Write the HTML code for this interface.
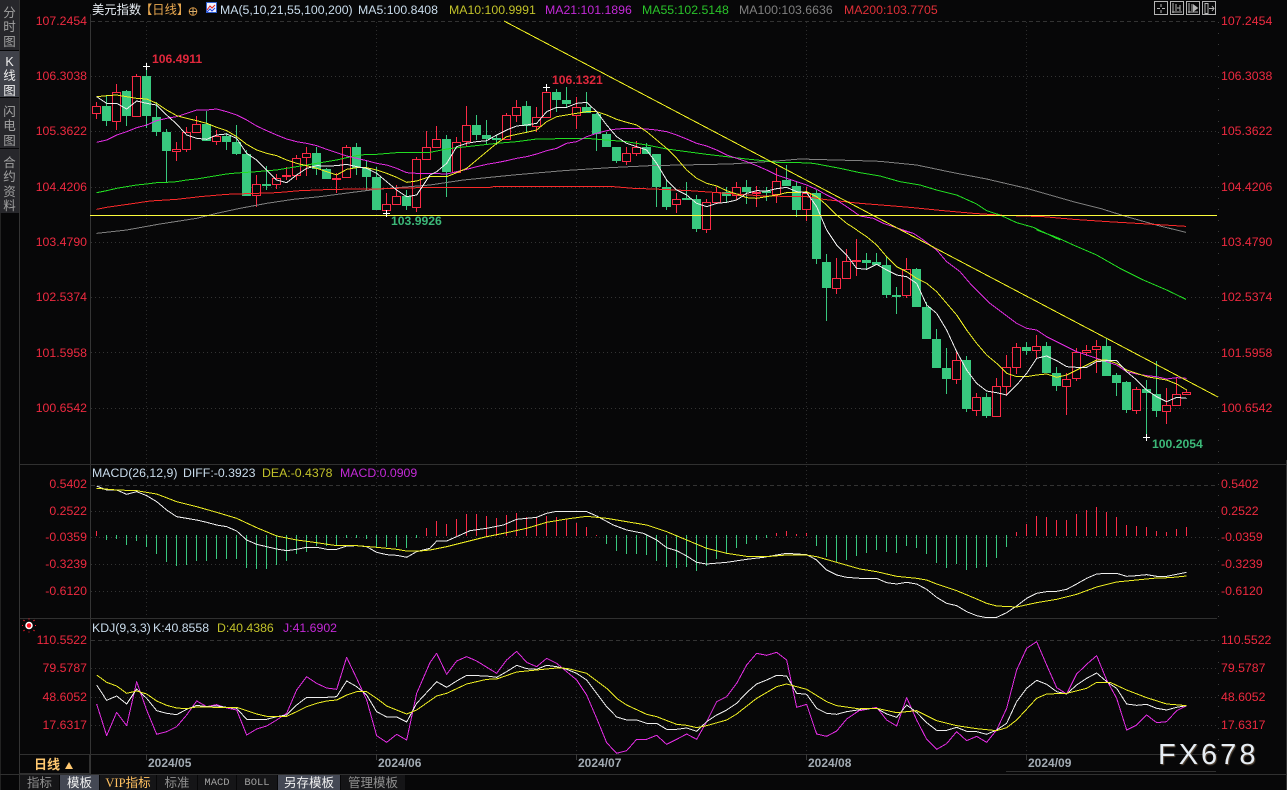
<!DOCTYPE html>
<html><head><meta charset="utf-8"><title>美元指数</title>
<style>
html,body{margin:0;padding:0;background:#070708}
#p{position:relative;width:1287px;height:790px;overflow:hidden;background:#070708;font-family:"Liberation Sans","Noto Sans CJK SC",sans-serif}
#p div{position:absolute;white-space:nowrap}
svg{position:absolute;left:0;top:0}
.t{font-size:12.3px;line-height:14px}
.l{left:20px;width:67px;text-align:right;font-size:12.3px;line-height:14px;color:#ee2a40}
.r{left:1221px;font-size:12.3px;line-height:14px;color:#ee2a40}
.d{top:756px;font-size:12px;line-height:14px;font-weight:bold;color:#a3abb3}
.a{font-size:12.2px;line-height:14px;font-weight:bold}
.s{left:0;width:19px;text-align:center;font-size:12.5px;line-height:14.3px;color:#a2a2a2;white-space:normal!important}
.b{top:775px;height:15px;line-height:16px;text-align:center;font-size:12.5px;color:#8f8f8f;background:#151517}
</style></head><body><div id="p">

<div style="left:0;top:0;width:19px;height:50px;background:#27272b"></div>
<div style="left:0;top:51px;width:19px;height:46px;background:#3f4149"></div>
<div style="left:0;top:98px;width:19px;height:50px;background:#27272b"></div>
<div style="left:0;top:149px;width:19px;height:64px;background:#27272b"></div>
<div style="left:0;top:213px;width:1px;height:577px;background:#222"></div>
<div class="s" style="top:6px">分<br>时<br>图</div>
<div class="s" style="top:55px;color:#f0f0f0">K<br>线<br>图</div>
<div class="s" style="top:105px">闪<br>电<br>图</div>
<div class="s" style="top:156px">合<br>约<br>资<br>料</div>

<svg width="1287" height="790" viewBox="0 0 1287 790" fill="none">
<g stroke="#2f2f2f">
<path d="M19.5 0V790M90.5 14V774M1286.5 460V790" stroke="#343434"/>
<path d="M20 464.5H1287M20 618.5H1217M20 754.5H1217M0 774.5H1287M1006 771.5H1216" stroke="#303030"/>
<path d="M20 773.5H90M89.5 755V774" stroke="#303030"/>
<path d="M91 21.5H1218M91 485.5H1218M91 640.5H1218" stroke-dasharray="4 3" stroke="#333"/>
<path d="M91 76.5H1218M91 131.5H1218M91 187.5H1218M91 242.5H1218M91 297.5H1218M91 352.5H1218M91 408.5H1218M91 511.5H1218M91 537.5H1218M91 564.5H1218M91 591.5H1218M91 668.5H1218M91 697.5H1218M91 725.5H1218" stroke-dasharray="1 3" stroke="#333"/>
<path d="M146.5 22V754M376.5 22V754M576.5 22V754M806.5 22V754M1026.5 22V754" stroke-dasharray="1 3" stroke="#2d2d2d"/>
<path d="M1218.5 22V618M1218.5 640V754" stroke-dasharray="1 10" stroke="#3a3a3a"/>
<path d="M146.5 754V760M376.5 754V760M576.5 754V760M806.5 754V760M1026.5 754V760" stroke="#3a3a3a"/>
</g>

<!-- green wicks -->
<path stroke="#38c87e" d="M106.5 96V126M126.5 90V126M146.5 66V128M156.5 102V136M166.5 129V182M206.5 111V141M226.5 133V150M236.5 125V155M246.5 150V196M266.5 166V190M316.5 147V175M326.5 168V179M356.5 143V175M366.5 160V191M376.5 167V210M406.5 190V210M446.5 135V197M476.5 115V140M486.5 120V145M496.5 135V145M526.5 101V132M556.5 89V112M566.5 87V108M586.5 92V113M596.5 113V151M606.5 132V147M616.5 147V163M646.5 143V154M656.5 154V207M666.5 180V210M686.5 182V200M696.5 195V232M726.5 187V202M746.5 180V204M766.5 187V201M786.5 165V186M796.5 182V217M816.5 190V264M826.5 254V321M866.5 253V270M876.5 253V265M886.5 256V298M896.5 287V314M916.5 268V307M926.5 302V339M936.5 329V368M946.5 348V394M966.5 356V412M986.5 393V418M1026.5 342V355M1046.5 342V373M1056.5 367V391M1106.5 338V376M1116.5 373V396M1126.5 381V413M1146.5 380V437M1156.5 361V417"/>
<!-- green bodies -->
<path fill="#38c87e" d="M102 106h9v15h-9zM122 91h9v25h-9zM142 76h9v40h-9zM152 117h9v15h-9zM162 132h9v19h-9zM202 124h9v17h-9zM222 136h9v6h-9zM232 142h9v12h-9zM242 154h9v42h-9zM262 184h9v2h-9zM312 153h9v16h-9zM322 169h9v10h-9zM352 147h9v21h-9zM362 168h9v9h-9zM372 177h9v33h-9zM402 196h9v10h-9zM442 139h9v33h-9zM472 125h9v10h-9zM482 135h9v4h-9zM492 138h9v2h-9zM522 106h9v20h-9zM552 92h9v8h-9zM562 100h9v4h-9zM582 107h9v6h-9zM592 114h9v20h-9zM602 134h9v13h-9zM612 147h9v14h-9zM642 147h9v7h-9zM652 154h9v33h-9zM662 187h9v20h-9zM682 198h9v2h-9zM692 199h9v30h-9zM722 192h9v4h-9zM742 187h9v5h-9zM762 191h9v2h-9zM782 180h9v6h-9zM792 186h9v24h-9zM812 193h9v66h-9zM822 262h9v26h-9zM862 260h9v3h-9zM872 262h9v3h-9zM882 265h9v30h-9zM892 295h9v2h-9zM912 269h9v38h-9zM922 307h9v32h-9zM932 339h9v29h-9zM942 368h9v11h-9zM962 360h9v49h-9zM982 397h9v19h-9zM1022 347h9v4h-9zM1042 346h9v27h-9zM1052 373h9v13h-9zM1102 346h9v30h-9zM1112 375h9v8h-9zM1122 382h9v28h-9zM1142 389h9v4h-9zM1152 394h9v17h-9z"/>
<!-- red wicks -->
<path stroke="#fa2a46" d="M96.5 102V119M116.5 84V130M136.5 74V117M176.5 142V161M186.5 127V152M196.5 116V133M216.5 130V145M256.5 175V207M276.5 174V189M286.5 167V180M296.5 155V180M306.5 147V176M336.5 173V193M346.5 145V177M386.5 193V213M396.5 185V204M416.5 157V212M426.5 131V159M436.5 126V148M456.5 137V173M466.5 106V147M506.5 113V140M516.5 100V122M536.5 107V132M546.5 87V117M576.5 97V129M626.5 147V165M636.5 141V156M676.5 193V213M706.5 199V233M716.5 187V204M736.5 182V200M756.5 186V207M776.5 168V203M806.5 187V221M836.5 258V294M846.5 249V278M856.5 239V276M906.5 258V298M956.5 352V384M976.5 393V416M996.5 378V416M1006.5 355V396M1016.5 343V374M1036.5 335V358M1066.5 373V415M1076.5 348V381M1086.5 345V356M1096.5 340V373M1136.5 387V414M1166.5 388V424M1176.5 377V405M1186.5 390V394"/>
<!-- red bodies -->
<path fill="#070708" stroke="#fa2a46" d="M92.5 106.5h8v7h-8zM112.5 92.5h8v29h-8zM132.5 76.5h8v40h-8zM172.5 149.5h8v2h-8zM182.5 132.5h8v17h-8zM192.5 124.5h8v8h-8zM212.5 136.5h8v5h-8zM252.5 184.5h8v11h-8zM272.5 178.5h8v6h-8zM282.5 175.5h8v1h-8zM292.5 158.5h8v17h-8zM302.5 153.5h8v4h-8zM332.5 178.5h8v1h-8zM342.5 147.5h8v30h-8zM382.5 204.5h8v6h-8zM392.5 196.5h8v8h-8zM412.5 159.5h8v48h-8zM422.5 147.5h8v12h-8zM432.5 139.5h8v8h-8zM452.5 142.5h8v30h-8zM462.5 125.5h8v16h-8zM502.5 115.5h8v24h-8zM512.5 107.5h8v8h-8zM532.5 117.5h8v9h-8zM542.5 92.5h8v25h-8zM572.5 107.5h8v8h-8zM622.5 153.5h8v8h-8zM632.5 147.5h8v6h-8zM672.5 199.5h8v5h-8zM702.5 202.5h8v27h-8zM712.5 192.5h8v10h-8zM732.5 187.5h8v8h-8zM752.5 192.5h8v1h-8zM772.5 181.5h8v13h-8zM802.5 193.5h8v16h-8zM832.5 278.5h8v10h-8zM842.5 261.5h8v17h-8zM852.5 260.5h8v1h-8zM902.5 269.5h8v26h-8zM952.5 360.5h8v19h-8zM972.5 397.5h8v13h-8zM992.5 386.5h8v30h-8zM1002.5 367.5h8v19h-8zM1012.5 347.5h8v20h-8zM1032.5 346.5h8v4h-8zM1062.5 379.5h8v7h-8zM1072.5 352.5h8v26h-8zM1082.5 350.5h8v2h-8zM1092.5 346.5h8v3h-8zM1132.5 389.5h8v21h-8zM1162.5 405.5h8v6h-8zM1172.5 394.5h8v11h-8zM1182.5 392.5h8v2h-8z"/>

<!-- MACD histogram -->
<path stroke="#38c87e" d="M106.5 535V540M116.5 535V539M126.5 535V545M136.5 535V541M146.5 535V547M156.5 535V554M166.5 535V562M176.5 535V566M186.5 535V565M196.5 535V561M206.5 535V561M216.5 535V559M226.5 535V559M236.5 535V559M246.5 535V568M256.5 535V569M266.5 535V569M276.5 535V565M286.5 535V561M296.5 535V554M306.5 535V552M316.5 535V546M326.5 535V546M336.5 535V545M346.5 535V538M356.5 535V538M366.5 535V539M376.5 535V547M386.5 535V547M396.5 535V547M406.5 535V548M416.5 535V538M606.5 535V544M616.5 535V551M626.5 535V554M636.5 535V554M646.5 535V555M656.5 535V561M666.5 535V567M676.5 535V568M686.5 535V567M696.5 535V571M706.5 535V566M716.5 535V559M726.5 535V554M736.5 535V548M746.5 535V544M756.5 535V540M766.5 535V538M816.5 535V546M826.5 535V557M836.5 535V562M846.5 535V560M856.5 535V556M866.5 535V553M876.5 535V550M886.5 535V552M896.5 535V553M906.5 535V546M916.5 535V548M926.5 535V554M936.5 535V563M946.5 535V568M956.5 535V564M966.5 535V570M976.5 535V568M986.5 535V567M996.5 535V558M1006.5 535V547"/>
<path stroke="#fa2a46" d="M96.5 531V536M426.5 528V536M436.5 521V536M446.5 524V536M456.5 519V536M466.5 514V536M476.5 514V536M486.5 516V536M496.5 518V536M506.5 515V536M516.5 513V536M526.5 517V536M536.5 517V536M546.5 516V536M556.5 517V536M566.5 519V536M576.5 523V536M586.5 527V536M596.5 535V536M776.5 533V536M786.5 531V536M796.5 534V536M806.5 533V536M1016.5 532V536M1026.5 524V536M1036.5 516V536M1046.5 517V536M1056.5 520V536M1066.5 520V536M1076.5 514V536M1086.5 510V536M1096.5 507V536M1106.5 512V536M1116.5 517V536M1126.5 525V536M1136.5 526V536M1146.5 527V536M1156.5 531V536M1166.5 532V536M1176.5 529V536M1186.5 527V536"/>

<g transform="scale(.33333)" stroke-width="3" stroke-linejoin="round" shape-rendering="crispEdges">
<!-- zoom1 -->
<g>
<polyline stroke="#808080" points="290,700 380,690 480,672 590,655 650,640 720,625 800,610 880,598 960,590 1050,578 1130,568 1290,555"/>
<polyline stroke="#fa2a2a" points="290,628 320,622 390,612 450,603 530,598 600,590 680,583 770,580 830,578 900,572 1000,568 1120,567 1290,562"/>
<polyline stroke="#22dd22" points="290,578 320,572 350,565 380,560 410,555 440,552 470,548 500,547 530,545 560,540 590,537 620,532 650,527 680,522 710,519 740,517 770,515 800,512 830,510 860,505 890,500 920,495 950,490 980,485 1010,480 1040,473 1070,467 1100,463 1130,463 1190,458 1290,457"/>
<polyline stroke="#e22ce2" points="290,427 320,420 350,405 380,395 410,383 440,375 470,362 500,355 530,350 560,340 590,330 620,330 650,327 680,335 710,345 740,360 770,378 800,392 830,405 860,417 890,425 920,430 950,437 980,448 1010,458 1040,468 1070,475 1100,482 1130,490 1160,495 1190,505 1220,518 1250,520 1290,520"/>
<polyline stroke="#eeee22" points="290,290 320,287 350,285 380,290 410,295 440,297 470,310 500,330 530,347 560,355 590,362 620,370 650,382 680,392 710,410 740,433 770,450 800,460 830,467 860,480 890,490 920,497 950,505 980,515 1010,525 1040,508 1070,503 1100,503 1130,510 1160,520 1190,532 1220,547 1250,543 1290,530"/>
<polyline stroke="#eeeeee" points="290,290 320,310 350,310 380,327 410,303 440,310 470,315 500,345 530,372 560,405 590,415 620,418 650,405 680,402 710,415 740,460 770,480 800,510 830,540 860,548 890,525 920,505 950,497 980,498 1010,497 1040,493 1070,500 1100,505 1130,520 1160,545 1190,570 1220,590 1250,585 1290,525"/>
<!-- macd zoom5 -->
<g transform="translate(0,1380)">
<polyline stroke="#eeeeee" points="290,78 320,90 350,90 380,103 410,95 440,107 470,125 500,150 530,170 560,175 590,180 620,187 650,195 680,200 710,213 740,240 770,253 800,260 830,267 860,272 890,268 920,262 950,262 980,268 1010,268 1040,258 1070,257 1100,260 1130,277 1160,284 1190,286 1220,292 1250,275 1290,265"/>
<polyline stroke="#eeee22" points="290,85 350,90 410,92 470,102 530,125 590,140 650,157 710,175 770,203 830,228 890,240 950,248 1010,257 1070,257 1130,262 1190,268 1220,273 1260,273 1290,270"/>
</g>
<!-- kdj zoom6 -->
<g transform="translate(0,1860)">
<polyline stroke="#e22ce2" points="290,252 320,347 350,277 380,317 410,185 440,270 470,343 500,335 530,320 560,285 590,243 620,260 650,254 680,264 710,270 740,345 770,327 800,318 830,300 860,280 890,210 920,170 950,190 980,204 1010,208 1040,112 1070,175 1100,240 1130,347 1160,367 1190,343 1220,360 1250,220 1290,128"/>
<polyline stroke="#eeeeee" points="290,195 320,241 350,228 380,252 410,207 440,235 470,272 500,280 530,284 560,268 590,256 620,260 650,258 680,262 710,265 740,298 770,298 800,298 830,290 860,285 890,255 920,232 950,232 980,232 1010,230 1040,183 1070,200 1100,225 1130,275 1160,291 1190,291 1220,306 1250,250 1290,207"/>
<polyline stroke="#eeee22" points="290,165 320,187 350,198 380,220 410,213 440,222 470,243 500,256 530,264 560,266 590,261 650,262 710,262 740,272 770,282 800,289 860,289 890,275 920,260 950,250 980,243 1010,240 1040,225 1070,215 1100,215 1130,235 1160,258 1190,270 1220,282 1250,270 1290,242"/>
</g>
</g>
<!-- zoom2 -->
<g transform="translate(1290,0)">
<polyline stroke="#808080" points="0,555 100,540 250,525 400,512 540,503 660,497 900,492 1040,483 1110,477 1290,482"/>
<polyline stroke="#fa2a2a" points="0,562 180,562 190,560 550,560 610,565 670,567 780,572 1000,588 1130,590 1180,598 1290,610"/>
<polyline stroke="#22dd22" points="0,457 50,447 110,440 200,430 260,425 320,417 470,415 530,420 590,425 650,435 710,447 770,455 830,463 890,470 950,477 1010,483 1040,487 1110,488 1150,490 1230,505 1290,518"/>
<polyline stroke="#e22ce2" points="0,520 50,522 80,515 110,508 140,500 170,493 200,488 230,482 260,475 290,470 320,462 350,452 380,445 410,430 440,425 470,410 500,400 530,392 560,387 590,385 620,385 650,387 680,390 710,395 740,405 770,417 800,430 830,438 860,450 890,465 920,475 950,485 980,497 1010,510 1040,525 1070,535 1100,545 1130,555 1160,568 1190,585 1220,600 1250,620 1290,648"/>
<polyline stroke="#eeee22" points="0,530 50,530 80,518 110,505 140,480 170,455 200,430 230,410 260,403 290,397 320,390 350,365 380,350 410,345 440,340 470,335 500,335 530,345 560,358 590,367 620,375 650,395 680,420 710,445 740,475 770,510 800,535 830,550 860,558 890,572 920,582 950,593 980,595 1010,590 1040,585 1070,578 1100,578 1130,575 1160,590 1190,615 1220,645 1250,670 1281,690"/>
<polyline stroke="#eeeeee" points="0,525 20,515 50,490 80,440 110,430 140,425 170,422 200,405 230,390 260,378 290,375 320,370 350,335 380,322 410,322 440,310 470,307 500,335 530,375 560,410 590,430 620,440 650,450 680,490 710,540 740,570 770,585 800,610 830,620 860,610 890,607 920,600 950,580 980,572 1010,573 1040,566 1070,562 1100,575 1130,578 1160,620 1190,690"/>
<g transform="translate(0,1380)">
<polyline stroke="#eeeeee" points="0,265 20,243 50,243 80,230 120,212 170,205 220,195 260,178 320,172 350,160 380,154 470,155 500,168 550,195 590,210 640,220 680,240 710,263 740,272 770,288 800,307 830,312 890,307 950,298 1000,292 1040,285 1070,280 1130,284 1160,300 1190,330 1220,345 1250,352 1290,355"/>
<polyline stroke="#eeee22" points="0,270 50,260 110,245 170,230 230,218 290,205 350,187 410,177 470,169 530,175 590,185 650,195 710,215 770,240 830,265 890,280 950,289 1010,290 1070,285 1130,285 1160,290 1220,307 1290,327"/>
<polyline stroke="#e22ce2" points="0,608 20,580 50,643 80,603 110,590 140,603 200,640 230,600 260,574 290,607 320,620 350,595 380,610 410,635 440,660 470,705 500,775 530,848 560,880 590,872 620,838 650,838 680,826 710,853 740,838 770,822 800,838 830,785 860,725 890,710 920,670 950,615 980,580 1010,586 1040,577 1070,600 1100,742 1130,733 1160,822 1190,829 1220,813 1250,777 1290,750"/>
<polyline stroke="#eeeeee" points="0,687 20,665 50,682 80,663 110,646 170,648 200,652 230,635 260,616 290,626 320,628 350,616 380,620 410,628 440,640 470,660 500,700 530,740 560,771 590,780 620,780 650,790 680,790 710,808 740,808 770,804 800,814 830,785 860,765 890,750 920,730 950,698 980,672 1010,660 1040,646 1070,648 1100,700 1130,703 1160,745 1190,760 1220,763 1250,755 1290,749"/>
<polyline stroke="#eeee22" points="0,722 20,708 50,700 110,672 170,658 200,657 260,636 320,630 380,624 410,625 470,640 530,685 560,715 590,735 650,763 680,770 740,793 770,796 800,803 830,797 890,780 920,762 980,715 1040,680 1070,672 1130,688 1190,725 1220,737 1290,747"/>
</g>
</g>
<!-- zoom3 -->
<g transform="translate(2580,0)">
<polyline stroke="#808080" points="0,482 60,484 170,495 280,518 380,537 500,565 640,605 720,625 800,650 900,678 978,697"/>
<polyline stroke="#fa2a2a" points="0,610 100,618 160,623 250,632 340,640 430,646 550,650 640,658 760,666 880,673 978,679"/>
<polyline stroke="#22dd22" points="0,518 60,528 120,545 180,555 230,570 290,585 350,612 380,632 420,645 470,668 520,682 600,720"/>
<polyline stroke="#e22ce2" points="0,648 40,655 70,670 100,680 130,690 160,700 190,720"/>
<g transform="translate(0,1380)">
<polyline stroke="#eeeeee" points="0,355 50,355 80,368 110,372 140,367 170,372 200,388 230,412 260,430 290,437 320,455 350,467 380,473 410,472 440,458 470,438 500,415 530,400 560,395 590,394 620,388 650,372 680,355 710,342 740,340 770,340 800,349 830,347 860,344 890,349 920,349 950,343 980,337"/>
<polyline stroke="#eeee22" points="0,327 50,335 110,349 170,355 200,360 230,372 290,392 350,417 380,430 410,438 470,441 530,428 590,418 650,403 710,381 770,366 830,360 890,354 930,353 980,348"/>
<polyline stroke="#e22ce2" points="0,752 50,742 80,780 110,798 140,713 170,780 200,838 230,868 260,851 290,815 320,842 350,829 380,847 410,810 440,745 470,630 500,565 530,545 560,615 590,683 620,702 650,642 680,613 710,587 740,660 770,715 800,810 830,795 860,765 890,788 920,785 950,752 980,737"/>
<polyline stroke="#eeeeee" points="0,748 50,745 80,762 110,772 140,735 170,757 200,788 230,811 260,811 290,802 320,814 350,815 380,823 410,810 440,790 470,725 500,685 530,661 560,673 590,695 620,702 650,675 680,655 710,639 740,665 770,685 800,732 830,736 860,733 890,745 920,750 950,742 980,737"/>
<polyline stroke="#eeee22" points="0,746 50,745 110,758 170,752 230,782 290,797 350,806 410,812 440,803 470,780 530,715 560,702 620,700 680,685 710,667 750,667 800,690 860,713 920,732 980,737"/>
</g>
</g>
<!-- zoom4 -->
<g transform="translate(2340,690)">
<polyline stroke="#22dd22" points="770,0 830,22 880,45 950,75 1020,115 1090,150 1160,180 1218,208"/>
<polyline stroke="#e22ce2" points="360,0 400,10 430,30 470,60 500,95 540,125 570,160 600,190 630,220 670,250 710,280 740,295 770,300 800,320 830,335 860,350 890,365 920,375 950,385 980,395 1010,405 1040,425 1070,432 1100,437 1130,440 1160,447 1190,443 1220,445"/>
<polyline stroke="#eeee22" points="230,0 260,20 290,45 320,80 350,110 380,125 410,145 440,160 470,185 500,220 530,255 560,300 590,340 620,375 650,400 680,430 710,440 740,440 770,435 800,432 830,442 860,435 890,420 920,405 950,390 980,390 1010,400 1040,420 1070,430 1100,440 1130,445 1160,450 1190,462 1220,480"/>
<polyline stroke="#eeeeee" points="140,0 170,45 200,75 230,115 260,118 290,103 320,120 350,135 380,140 410,160 440,225 470,250 500,300 530,365 560,420 590,460 620,483 650,488 680,495 710,465 740,430 770,385 800,378 830,392 860,410 890,412 920,412 950,395 980,392 1010,392 1040,425 1070,450 1100,480 1130,500 1160,515 1190,502 1220,505"/>
</g>
</g>

<!-- trend + level lines -->
<path stroke="#f4f420" d="M504 21L1218 397" shape-rendering="crispEdges"/>
<path stroke="#fcfc3c" d="M90 215.5H1217"/>
<!-- crosses -->
<path stroke="#fff" d="M143 66.5h7M146.5 63v7M543 87.5h7M546.5 84v7M383 213.5h7M386.5 210v7M1143 437.5h7M1146.5 434v7"/>

<!-- top-right icons -->
<g stroke="#b4b4b4" fill="none">
<rect x="1154.5" y="1.5" width="13" height="13"/><rect x="1170.5" y="1.5" width="13" height="13"/><rect x="1186.5" y="1.5" width="13" height="13"/><rect x="1202.5" y="1.5" width="13" height="13"/>
<path d="M1161 4v3M1161 10v3M1157 8.5h3M1162 8.5h3"/>
<path d="M1173 3v10M1172 12h10M1176 4v7M1180 5v6M1177 8h3"/>
<path d="M1189 3v10M1188 12h10M1192 4v7"/>
<path fill="#b4b4b4" d="M1193.5 5l4 3-4 3z"/>
<path d="M1205 3.500v10h3v-10zM1209 8.500h5M1212 6l2 2.500-2 2.500"/>
</g>
<!-- header icons -->
<circle cx="193" cy="11.500" r="3.800" stroke="#d8913a"/>
<path stroke="#d8b070" d="M189 11.500h8M193 7.500v8"/>
<rect x="206.500" y="2.500" width="10" height="10" fill="#f4f4ff" stroke="#3060d0"/>
<path stroke="#e02020" d="M207 10l3-4 2 2 3-3"/><path stroke="#2040e0" d="M207 12l3-3 2 2 3-3"/>
<!-- red dot -->
<circle cx="29" cy="625.500" r="3" fill="#ff1020" stroke="#fff" stroke-width="1.500"/>
<path stroke="#ff2030" d="M29 619.500v-1M29 631.500v1M23 625.500h-1M35 625.500h1M24.500 621l-1-1M33.500 621l1-1M24.500 630l-1 1M33.500 630l1 1"/>
<!-- triangle -->
<path fill="#ffc870" d="M65 769l4-7 4 7z"/>
</svg>

<!-- header -->
<div class="t" style="left:92px;top:3px;color:#e8eef4">美元指数</div>
<div class="t" style="left:140px;top:3px;color:#e8a850">【日线】</div>
<div class="t" style="left:220px;top:3px;color:#c9dcec">MA(5,10,21,55,100,200)</div>
<div class="t" style="left:358px;top:3px;color:#c9dcec">MA5:100.8408</div>
<div class="t" style="left:449px;top:3px;color:#c2c22a">MA10:100.9991</div>
<div class="t" style="left:545px;top:3px;color:#c42ad8">MA21:101.1896</div>
<div class="t" style="left:642px;top:3px;color:#2ac42a">MA55:102.5148</div>
<div class="t" style="left:739px;top:3px;color:#808080">MA100:103.6636</div>
<div class="t" style="left:844px;top:3px;color:#e03038">MA200:103.7705</div>

<div class="t" style="left:92px;top:466px;color:#c9dcec">MACD(26,12,9)</div>
<div class="t" style="left:183px;top:466px;color:#c9dcec">DIFF:-0.3923</div>
<div class="t" style="left:262px;top:466px;color:#c2c22a">DEA:-0.4378</div>
<div class="t" style="left:340px;top:466px;color:#c42ad8">MACD:0.0909</div>

<div class="t" style="left:92px;top:621px;color:#c9dcec">KDJ(9,3,3)</div>
<div class="t" style="left:153px;top:621px;color:#c9dcec">K:40.8558</div>
<div class="t" style="left:217px;top:621px;color:#c2c22a">D:40.4386</div>
<div class="t" style="left:283px;top:621px;color:#c42ad8">J:41.6902</div>

<!-- left axis -->
<div class="l" style="top:14px">107.2454</div><div class="l" style="top:69px">106.3038</div><div class="l" style="top:124px">105.3622</div><div class="l" style="top:180px">104.4206</div><div class="l" style="top:235px">103.4790</div><div class="l" style="top:290px">102.5374</div><div class="l" style="top:346px">101.5958</div><div class="l" style="top:401px">100.6542</div>
<div class="l" style="top:477px">0.5402</div><div class="l" style="top:504px">0.2522</div><div class="l" style="top:530px">-0.0359</div><div class="l" style="top:557px">-0.3239</div><div class="l" style="top:584px">-0.6120</div>
<div class="l" style="top:633px">110.5522</div><div class="l" style="top:661px">79.5787</div><div class="l" style="top:690px">48.6052</div><div class="l" style="top:718px">17.6317</div>
<!-- right axis -->
<div class="r" style="top:14px">107.2454</div><div class="r" style="top:69px">106.3038</div><div class="r" style="top:124px">105.3622</div><div class="r" style="top:180px">104.4206</div><div class="r" style="top:235px">103.4790</div><div class="r" style="top:290px">102.5374</div><div class="r" style="top:346px">101.5958</div><div class="r" style="top:401px">100.6542</div>
<div class="r" style="top:477px">0.5402</div><div class="r" style="top:504px">0.2522</div><div class="r" style="top:530px">-0.0359</div><div class="r" style="top:557px">-0.3239</div><div class="r" style="top:584px">-0.6120</div>
<div class="r" style="top:633px">110.5522</div><div class="r" style="top:661px">79.5787</div><div class="r" style="top:690px">48.6052</div><div class="r" style="top:718px">17.6317</div>

<!-- annotations -->
<div class="a" style="left:152px;top:52px;color:#e0283c">106.4911</div>
<div class="a" style="left:552px;top:73px;color:#e0283c">106.1321</div>
<div class="a" style="left:391px;top:214px;color:#3cb878">103.9926</div>
<div class="a" style="left:1152px;top:437px;color:#3cb878">100.2054</div>

<!-- dates -->
<div class="d" style="left:148px">2024/05</div><div class="d" style="left:378px">2024/06</div><div class="d" style="left:578px">2024/07</div><div class="d" style="left:808px">2024/08</div><div class="d" style="left:1028px">2024/09</div>

<div style="left:34px;top:757px;font-size:13px;line-height:16px;color:#ffc870;font-weight:bold">日线</div>
<div style="left:1158px;top:738px;font-size:29px;line-height:34px;letter-spacing:3px;color:#e6edf4;text-shadow:1px 1px 1px #5a4a3a">FX678</div>

<!-- bottom tabs -->
<div class="b" style="left:20px;width:39px">指标</div>
<div class="b" style="left:60px;width:39px;background:#444854;color:#f0f0f0">模板</div>
<div class="b" style="left:100px;width:56px;color:#ffc060"><span style="font-family:'Liberation Serif','Noto Sans CJK SC',serif">VIP</span>指标</div>
<div class="b" style="left:157px;width:40px">标准</div>
<div class="b" style="left:198px;width:38px;font-family:'Liberation Mono',monospace;font-size:10.5px;color:#a0a0a0">MACD</div>
<div class="b" style="left:237px;width:40px;font-family:'Liberation Mono',monospace;font-size:10.5px;color:#a0a0a0">BOLL</div>
<div class="b" style="left:278px;width:62px;background:#444854;color:#f0f0f0">另存模板</div>
<div class="b" style="left:341px;width:64px">管理模板</div>
</div></body></html>
